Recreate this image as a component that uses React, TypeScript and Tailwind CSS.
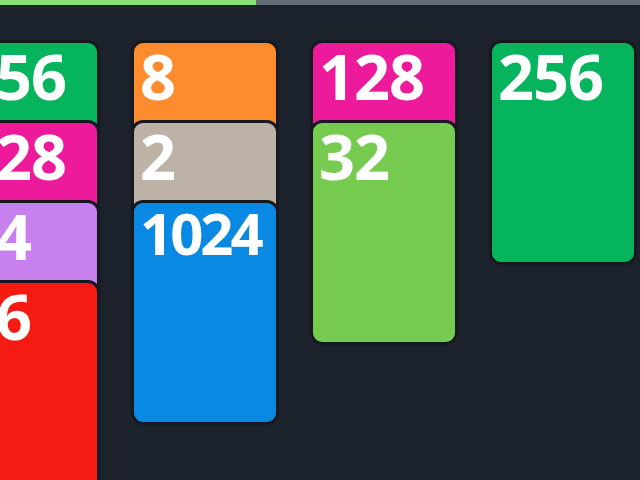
const tileColors: Record<number, string> = {
  2: "bg-[#bdb2a6]",
  8: "bg-[#fd8c2e]",
  16: "bg-[#f51b12]",
  32: "bg-[#76cb50]",
  64: "bg-[#c880ee]",
  128: "bg-[#ee1a9c]",
  256: "bg-[#05b45c]",
  1024: "bg-[#0a89e2]",
};

const columns: number[][] = [
  [256, 128, 64, 16],
  [8, 2, 1024],
  [128, 32],
  [256],
];

function Tile({ value, first }: { value: number; first: boolean }) {
  const big = value >= 1000;
  return (
    <div
      className={`${tileColors[value]} ${first ? "" : "-mt-[145px]"} h-[225px] w-[148px] shrink-0 rounded-[12px] border-[3px] border-[#161a20] px-[6px] pt-[1px]`}
    >
      <span
        className={`block font-bold leading-none text-white ${big ? "text-[58px] tracking-[-3px]" : "text-[63px] tracking-[-1px]"}`}
        style={{ fontFamily: '"Open Sans", "Noto Sans", sans-serif' }}
      >
        {value}
      </span>
    </div>
  );
}

export default function App() {
  return (
    <div className="h-[480px] w-[640px] overflow-hidden bg-[#1b222b]">
      <div className="flex h-[5px]">
        <div className="w-[256px] bg-[#8ddf73]" />
        <div className="flex-1 bg-[#646c76]" />
      </div>
      <div className="-ml-[48px] flex gap-[31px] pt-[35px]">
        {columns.map((col, i) => (
          <div key={i} className="flex flex-col">
            {col.map((v, j) => (
              <Tile key={j} value={v} first={j === 0} />
            ))}
          </div>
        ))}
      </div>
    </div>
  );
}
